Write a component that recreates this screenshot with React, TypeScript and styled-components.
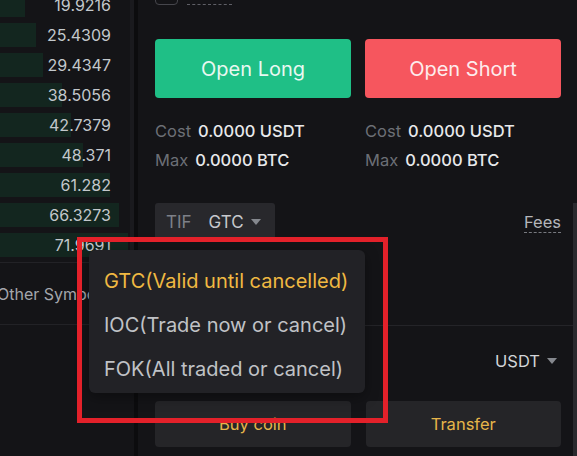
import React from "react";
import styled, { createGlobalStyle } from "styled-components";

const GlobalStyle = createGlobalStyle`
  html, body {
    margin: 0;
    padding: 0;
    background: #0c0c0e;
  }
  body {
    font-family: Inter, "Noto Sans", sans-serif;
  }
  * {
    box-sizing: border-box;
  }
`;

const depth = [
  { price: "19.9216", width: 25 },
  { price: "25.4309", width: 36 },
  { price: "29.4347", width: 43 },
  { price: "38.5056", width: 62 },
  { price: "42.7379", width: 71 },
  { price: "48.371", width: 83 },
  { price: "61.282", width: 110 },
  { price: "66.3273", width: 119 },
  { price: "71.9691", width: 128 },
];

const tifOptions = [
  { label: "GTC(Valid until cancelled)", active: true },
  { label: "IOC(Trade now or cancel)", active: false },
  { label: "FOK(All traded or cancel)", active: false },
];

export default function App() {
  return (
    <>
      <GlobalStyle />
      <Screen>
        <LeftPanel>
          <Book>
            <DepthList>
              {depth.map((row) => (
                <DepthRow key={row.price}>
                  <DepthBar style={{ width: row.width }} />
                  <Price>{row.price}</Price>
                </DepthRow>
              ))}
            </DepthList>
            <OtherRow>Other Symbols</OtherRow>
          </Book>
          <ScrollStrip />
        </LeftPanel>

        <RightPanel>
          <Content>
            <TopRow>
              <Checkbox />
              <DottedLabel />
            </TopRow>

            <ActionRow>
              <TradeButton $side="long">Open Long</TradeButton>
              <TradeButton $side="short">Open Short</TradeButton>
            </ActionRow>

            <InfoGrid>
              <InfoColumn>
                <InfoLine>
                  <InfoLabel>Cost</InfoLabel>
                  <InfoValue>0.0000 USDT</InfoValue>
                </InfoLine>
                <InfoLine>
                  <InfoLabel>Max</InfoLabel>
                  <InfoValue>0.0000 BTC</InfoValue>
                </InfoLine>
              </InfoColumn>
              <InfoColumn>
                <InfoLine>
                  <InfoLabel>Cost</InfoLabel>
                  <InfoValue>0.0000 USDT</InfoValue>
                </InfoLine>
                <InfoLine>
                  <InfoLabel>Max</InfoLabel>
                  <InfoValue>0.0000 BTC</InfoValue>
                </InfoLine>
              </InfoColumn>
            </InfoGrid>

            <TifRow>
              <TifBox>
                <TifLabel>TIF</TifLabel>
                <TifValue>GTC</TifValue>
                <Caret />
              </TifBox>
              <Fees>Fees</Fees>
            </TifRow>

            <Separator />

            <AssetRow>
              <AssetSelect>
                USDT
                <Caret />
              </AssetSelect>
            </AssetRow>

            <FooterButtons>
              <GhostButton>Buy coin</GhostButton>
              <GhostButton>Transfer</GhostButton>
            </FooterButtons>
          </Content>
          <ScrollTrack>
            <ScrollThumb />
          </ScrollTrack>
        </RightPanel>

        <Dropdown>
          {tifOptions.map((opt) => (
            <DropdownItem key={opt.label} $active={opt.active}>
              {opt.label}
            </DropdownItem>
          ))}
        </Dropdown>
        <Highlight />
      </Screen>
    </>
  );
}

const Screen = styled.div`
  position: relative;
  width: 577px;
  height: 456px;
  overflow: hidden;
  display: flex;
  gap: 4px;
  background: #0c0c0e;
`;

// order book

const LeftPanel = styled.div`
  width: 134px;
  display: flex;
  background: #141417;
`;

const Book = styled.div`
  width: 130px;
  display: flex;
  flex-direction: column;
  overflow: hidden;
`;

const DepthList = styled.div`
  margin-top: -10px;
  display: flex;
  flex-direction: column;
`;

const DepthRow = styled.div`
  position: relative;
  height: 30px;
  display: flex;
  align-items: center;
  justify-content: flex-end;
  padding-right: 19px;
`;

const DepthBar = styled.div`
  position: absolute;
  left: 0;
  top: 3px;
  height: 24px;
  background: #13261f;
`;

const Price = styled.span`
  position: relative;
  font-size: 16px;
  color: #c3c8cc;
`;

const OtherRow = styled.div`
  margin-top: 2px;
  height: 63px;
  display: flex;
  align-items: center;
  margin-left: -3px;
  border-top: 1px solid #222226;
  border-bottom: 1px solid #222226;
  font-size: 16px;
  color: #a3a6ac;
  white-space: nowrap;
`;

const ScrollStrip = styled.div`
  width: 4px;
  height: 258px;
  background: #1a1a1e;
`;

// order form

const RightPanel = styled.div`
  flex: 1;
  display: flex;
  background: #141417;
`;

const Content = styled.div`
  flex: 1;
  display: flex;
  flex-direction: column;
  margin-top: -15px;
  padding: 0 12px 0 17px;
`;

const TopRow = styled.div`
  height: 20px;
  display: flex;
  align-items: flex-end;
  gap: 9px;
`;

const Checkbox = styled.div`
  width: 23px;
  height: 20px;
  border: 1.5px solid #46464c;
  border-radius: 4px;
`;

const DottedLabel = styled.div`
  width: 45px;
  height: 20px;
  border-bottom: 1px dashed #5f5f66;
`;

const ActionRow = styled.div`
  margin-top: 34px;
  display: grid;
  grid-template-columns: 1fr 1fr;
  gap: 14px;
`;

const TradeButton = styled.button<{ $side: "long" | "short" }>`
  height: 59px;
  border: none;
  border-radius: 4px;
  font-family: inherit;
  font-size: 20px;
  font-weight: 400;
  color: ${({ $side }) => ($side === "long" ? "#e9f8f1" : "#fdeced")};
  background: ${({ $side }) => ($side === "long" ? "#1fbf86" : "#f6565e")};
`;

const InfoGrid = styled.div`
  margin-top: 18px;
  display: grid;
  grid-template-columns: 1fr 1fr;
  gap: 14px;
`;

const InfoColumn = styled.div`
  display: flex;
  flex-direction: column;
`;

const InfoLine = styled.div`
  height: 29px;
  display: flex;
  align-items: center;
  font-size: 16.5px;
  white-space: nowrap;
`;

const InfoLabel = styled.span`
  color: #6c6f76;
  margin-right: 7px;
`;

const InfoValue = styled.span`
  color: #e8e9eb;
  font-weight: 500;
`;

const TifRow = styled.div`
  margin-top: 29px;
  display: flex;
  align-items: center;
  justify-content: space-between;
`;

const TifBox = styled.div`
  width: 120px;
  height: 38px;
  display: flex;
  align-items: center;
  padding: 0 11px;
  background: #28282c;
  border-radius: 3px;
  font-size: 17px;
`;

const TifLabel = styled.span`
  color: #7d8088;
`;

const TifValue = styled.span`
  margin-left: 17px;
  color: #c7c9cd;
`;

const Caret = styled.span`
  margin-left: 7px;
  width: 0;
  height: 0;
  border-left: 5px solid transparent;
  border-right: 5px solid transparent;
  border-top: 6px solid #85888e;
`;

const Fees = styled.span`
  font-size: 16.5px;
  color: #b4b6ba;
  border-bottom: 1px dashed #77797f;
  line-height: 20px;
`;

const Separator = styled.div`
  margin: 84px -12px 0 -17px;
  height: 1px;
  background: #242428;
`;

const AssetRow = styled.div`
  margin-top: 23px;
  height: 24px;
  display: flex;
  justify-content: flex-end;
  padding-right: 4px;
`;

const AssetSelect = styled.div`
  display: flex;
  align-items: center;
  font-size: 16.5px;
  color: #d2d4d8;
`;

const FooterButtons = styled.div`
  margin-top: 28px;
  display: grid;
  grid-template-columns: 1fr 1fr;
  gap: 15px;
`;

const GhostButton = styled.button`
  height: 46px;
  border: none;
  border-radius: 4px;
  background: #252528;
  font-family: inherit;
  font-size: 16.5px;
  color: #e6b54a;
`;

const ScrollTrack = styled.div`
  width: 4px;
  display: flex;
  flex-direction: column;
`;

const ScrollThumb = styled.div`
  margin-top: 203px;
  flex: 1;
  background: #2a2a2e;
`;

// overlay

const Dropdown = styled.div`
  position: absolute;
  left: 89px;
  top: 250px;
  width: 276px;
  padding: 9px 0 2px;
  background: #222226;
  border-radius: 6px;
  box-shadow: 0 4px 14px rgba(0, 0, 0, 0.35);
`;

const DropdownItem = styled.div<{ $active: boolean }>`
  height: 44px;
  line-height: 44px;
  padding-left: 15px;
  font-size: 20px;
  white-space: nowrap;
  color: ${({ $active }) => ($active ? "#f0b942" : "#c0c2c6")};
`;

const Highlight = styled.div`
  position: absolute;
  left: 77px;
  top: 237px;
  width: 311px;
  height: 186px;
  border: 5px solid #e3212a;
`;
